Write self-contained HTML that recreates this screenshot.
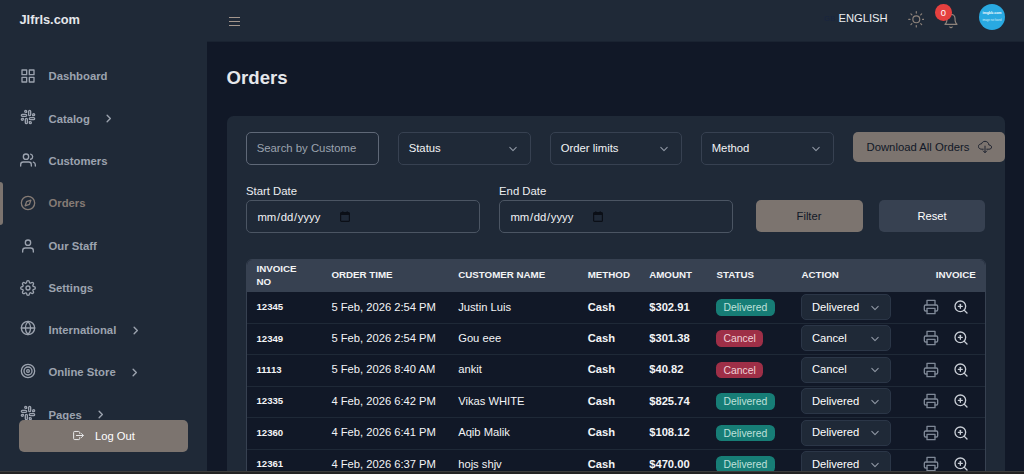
<!DOCTYPE html>
<html><head><meta charset="utf-8"><title>Orders</title>
<style>
*{box-sizing:border-box;margin:0;padding:0}
html,body{width:1024px;height:474px;overflow:hidden;background:#111827;font-family:"Liberation Sans",sans-serif;}
body{position:relative;color:#e5e7eb}
.abs{position:absolute}
#side{position:absolute;left:0;top:0;width:207px;height:474px;background:#1f2937}
#head{position:absolute;left:207px;top:0;width:817px;height:42px;background:#1f2937;border-bottom:1px solid #1a2331}
.brand{position:absolute;left:19.5px;top:12px;font-size:12.8px;font-weight:700;color:#e5e7eb;line-height:16px;white-space:nowrap}
.nav{position:absolute;left:0;width:207px;height:20px}
.nav svg.ic{position:absolute;left:19.5px;top:2.2px;width:16px;height:16px;fill:none;stroke:#9ca3af;stroke-width:2;stroke-linecap:round;stroke-linejoin:round}
.nav span{position:absolute;left:48.5px;top:3.5px;font-size:11.3px;font-weight:700;color:#9ca3af;line-height:14px;white-space:nowrap}
.nav svg.ch{position:absolute;top:4.5px;width:11px;height:11px;fill:none;stroke:#9ca3af;stroke-width:3;stroke-linecap:round;stroke-linejoin:round}
.nav.act svg.ic{stroke:#857b75}
.nav.act span{color:#857b75}
#actbar{position:absolute;left:0;top:182px;width:3px;height:42.5px;background:#7c746f;border-radius:0 4px 4px 0}
#logout{position:absolute;left:19px;top:420px;width:169px;height:31.5px;background:#7c746f;border-radius:5px}
#logout span{position:absolute;left:76px;top:9px;font-size:11.2px;color:#fff;line-height:14px;white-space:nowrap}
#logout svg{position:absolute;left:52.5px;top:9px;width:13px;height:13px;fill:none;stroke:#f3f4f6;stroke-width:36;stroke-linecap:round;stroke-linejoin:round}
#strip{position:absolute;left:0;top:471px;width:1024px;height:3px;background:#242424;border-top:1px solid #3d3d3d;z-index:50}
h1{position:absolute;left:226.6px;top:67.3px;font-size:18.6px;font-weight:700;color:#e5e7eb;line-height:22px}
#card{position:absolute;left:227px;top:116px;width:778px;height:380px;background:#1f2937;border-radius:6.5px}
.inp{position:absolute;height:33px;border:1px solid #4b5563;border-radius:5px;background:#1f2937;font-size:11.3px;line-height:14px;color:#f1f3f5;white-space:nowrap;overflow:hidden}
.inp span{position:absolute;left:9.7px;top:7.7px}
.inp i{font-style:normal;padding:0 .7px}
.sel{border-color:#374151}
.sel svg{position:absolute;right:9px;top:7.5px;width:16px;height:16px;fill:none;stroke:#8f97a4;stroke-width:1.35;stroke-linecap:round;stroke-linejoin:round}
.lbl{position:absolute;font-size:11.35px;color:#eceef1;line-height:14px}
.btn{position:absolute;border-radius:5px;font-size:11.2px;line-height:14px;text-align:center}
#tbl{position:absolute;left:246px;top:259px;width:740px;height:230px;border:1px solid #374151;border-radius:6px 6px 0 0;overflow:hidden;background:#111827}
#th{position:absolute;left:-1px;top:-1px;width:742px;height:32.5px;background:#374151}
#th div{position:absolute;font-size:9.75px;font-weight:700;color:#f3f4f6;line-height:13px;white-space:nowrap}
.row{position:absolute;left:0;width:740px;height:31.4px;border-top:1px solid #1f2937}
.row div{position:absolute;white-space:nowrap;line-height:14px;color:#f3f4f6}
.inv{left:9.5px;top:7.8px;font-size:9.6px;font-weight:700}
.tm{left:84.4px;top:7px;font-size:11.2px}
.nm{left:211.2px;top:7px;font-size:11.2px}
.mt{left:340.7px;top:7px;font-size:11.2px;font-weight:700}
.am{left:402.2px;top:7px;font-size:11.2px;font-weight:700}
.bd{left:469px;top:6.5px;height:16.5px;border-radius:5.5px;font-size:10.4px;line-height:17.6px !important;padding:0 7.5px}
.bd.d{background:#177d76;color:#bfe0db !important}
.bd.c{background:#9e2f47;color:#f0d2d8 !important}
.as{left:553.5px;top:1.5px;width:90px;height:26px;border:1px solid #2b3647;border-radius:5px;background:#1f2937}
.as span{position:absolute;left:10.5px;top:4.5px;font-size:11.2px;line-height:14px;color:#fff}
.as svg{position:absolute;left:65.2px;top:4.6px;width:16px;height:16px;fill:none;stroke:#8f97a4;stroke-width:1.35;stroke-linecap:round;stroke-linejoin:round}
.row svg.pr{position:absolute;left:676.2px;top:6.5px;width:16px;height:16px;fill:none;stroke:#7f8897;stroke-width:2;stroke-linecap:round;stroke-linejoin:round}
.row svg.zm{position:absolute;left:705.6px;top:6.5px;width:16px;height:16px;fill:none;stroke:#c9ced6;stroke-width:2;stroke-linecap:round;stroke-linejoin:round}
#wrap{position:absolute;left:0;top:0;width:1024px;height:474px; }
</style></head><body>
<div id="wrap">
<div id="side">
<div class="brand">Jlfrls.com</div>
<div id="actbar"></div>
<div class="nav" style="top:66.3px"><svg style="top:1.90px" class="ic" viewBox="0 0 24 24"><rect x="3" y="3" width="7" height="7"/><rect x="14" y="3" width="7" height="7"/><rect x="14" y="14" width="7" height="7"/><rect x="3" y="14" width="7" height="7"/></svg><span style="top:3.00px">Dashboard</span></div>
<div class="nav" style="top:108.6px"><svg style="top:0.60px" class="ic" viewBox="0 0 24 24"><path d="M14.5 10c-.83 0-1.5-.67-1.5-1.5v-5c0-.83.67-1.5 1.500-1.500s1.500.67 1.500 1.500v5c0 .83-.67 1.500-1.500 1.500z"/><path d="M20.500 10H19V8.500c0-.83.67-1.500 1.500-1.500s1.500.67 1.500 1.500-.67 1.500-1.500 1.500z"/><path d="M9.500 14c.83 0 1.500.67 1.500 1.500v5c0 .83-.67 1.500-1.500 1.500S8 21.330 8 20.500v-5c0-.83.67-1.500 1.500-1.500z"/><path d="M3.500 14H5v1.500c0 .83-.67 1.500-1.500 1.500S2 16.330 2 15.500 2.670 14 3.500 14z"/><path d="M14 14.500c0-.83.67-1.500 1.500-1.500h5c.83 0 1.500.67 1.500 1.500s-.67 1.500-1.500 1.500h-5c-.83 0-1.500-.67-1.500-1.500z"/><path d="M15.500 19H14v1.500c0 .83.67 1.500 1.500 1.500s1.500-.67 1.500-1.500-.67-1.500-1.500-1.500z"/><path d="M10 9.500C10 8.670 9.330 8 8.500 8h-5C2.670 8 2 8.670 2 9.500S2.670 11 3.500 11h5c.83 0 1.500-.67 1.500-1.500z"/><path d="M8.500 5H10V3.500C10 2.670 9.330 2 8.500 2S7 2.670 7 3.500 7.670 5 8.500 5z"/></svg><span style="top:3.10px">Catalog</span><svg class="ch" viewBox="0 0 24 24" style="left:103px;top:4.50px"><path d="M9 5l7 7-7 7"/></svg></div>
<div class="nav" style="top:150.9px"><svg style="top:1.60px" class="ic" viewBox="0 0 24 24"><path d="M17 21v-2a4 4 0 0 0-4-4H5a4 4 0 0 0-4 4v2"/><circle cx="9" cy="7" r="4"/><path d="M23 21v-2a4 4 0 0 0-3-3.870"/><path d="M16 3.130a4 4 0 0 1 0 7.750"/></svg><span style="top:3.50px">Customers</span></div>
<div class="nav act" style="top:193.2px"><svg style="top:2.30px" class="ic" viewBox="0 0 24 24"><circle cx="12" cy="12" r="10"/><polygon points="16.240 7.760 14.120 14.120 7.760 16.240 9.880 9.880 16.240 7.760"/></svg><span style="top:3.00px">Orders</span></div>
<div class="nav" style="top:235.5px"><svg style="top:2.00px" class="ic" viewBox="0 0 24 24"><path d="M20 21v-2a4 4 0 0 0-4-4H8a4 4 0 0 0-4 4v2"/><circle cx="12" cy="7" r="4"/></svg><span style="top:3.10px">Our Staff</span></div>
<div class="nav" style="top:277.8px"><svg style="top:2.20px" class="ic" viewBox="0 0 24 24"><circle cx="12" cy="12" r="3"/><path d="M19.400 15a1.650 1.650 0 0 0 .33 1.820l.06.06a2 2 0 0 1 0 2.830 2 2 0 0 1-2.830 0l-.06-.06a1.650 1.650 0 0 0-1.820-.33 1.650 1.650 0 0 0-1 1.510V21a2 2 0 0 1-2 2 2 2 0 0 1-2-2v-.09A1.650 1.650 0 0 0 9 19.400a1.650 1.650 0 0 0-1.820.33l-.06.06a2 2 0 0 1-2.830 0 2 2 0 0 1 0-2.830l.06-.06a1.650 1.650 0 0 0 .33-1.820 1.650 1.650 0 0 0-1.510-1H3a2 2 0 0 1-2-2 2 2 0 0 1 2-2h.09A1.650 1.650 0 0 0 4.600 9a1.650 1.650 0 0 0-.33-1.820l-.06-.06a2 2 0 0 1 0-2.830 2 2 0 0 1 2.830 0l.06.06a1.650 1.650 0 0 0 1.820.33H9a1.650 1.650 0 0 0 1-1.510V3a2 2 0 0 1 2-2 2 2 0 0 1 2 2v.09a1.650 1.650 0 0 0 1 1.510 1.650 1.650 0 0 0 1.820-.33l.06-.06a2 2 0 0 1 2.830 0 2 2 0 0 1 0 2.830l-.06.06a1.650 1.650 0 0 0-.33 1.820V9a1.650 1.650 0 0 0 1.510 1H21a2 2 0 0 1 2 2 2 2 0 0 1-2 2h-.09a1.650 1.650 0 0 0-1.510 1z"/></svg><span style="top:3.50px">Settings</span></div>
<div class="nav" style="top:320.1px"><svg style="top:-0.10px" class="ic" viewBox="0 0 24 24"><circle cx="12" cy="12" r="10"/><line x1="2" y1="12" x2="22" y2="12"/><path d="M12 2a15.300 15.300 0 0 1 4 10 15.300 15.300 0 0 1-4 10 15.300 15.300 0 0 1-4-10 15.300 15.300 0 0 1 4-10z"/></svg><span style="top:3.10px">International</span><svg class="ch" viewBox="0 0 24 24" style="left:130.3px;top:4.50px"><path d="M9 5l7 7-7 7"/></svg></div>
<div class="nav" style="top:362.4px"><svg style="top:0.20px" class="ic" viewBox="0 0 24 24"><circle cx="12" cy="12" r="10"/><circle cx="12" cy="12" r="6"/><circle cx="12" cy="12" r="2"/></svg><span style="top:3.10px">Online Store</span><svg class="ch" viewBox="0 0 24 24" style="left:129.3px;top:4.50px"><path d="M9 5l7 7-7 7"/></svg></div>
<div class="nav" style="top:404.7px"><svg style="top:0.20px" class="ic" viewBox="0 0 24 24"><path d="M14.5 10c-.83 0-1.5-.67-1.5-1.5v-5c0-.83.67-1.5 1.500-1.500s1.500.67 1.500 1.500v5c0 .83-.67 1.500-1.500 1.500z"/><path d="M20.500 10H19V8.500c0-.83.67-1.500 1.500-1.500s1.500.67 1.500 1.500-.67 1.500-1.500 1.500z"/><path d="M9.500 14c.83 0 1.500.67 1.500 1.500v5c0 .83-.67 1.500-1.500 1.500S8 21.330 8 20.500v-5c0-.83.67-1.500 1.500-1.500z"/><path d="M3.500 14H5v1.500c0 .83-.67 1.500-1.500 1.500S2 16.330 2 15.500 2.670 14 3.500 14z"/><path d="M14 14.500c0-.83.67-1.500 1.500-1.500h5c.83 0 1.500.67 1.500 1.500s-.67 1.500-1.500 1.500h-5c-.83 0-1.500-.67-1.500-1.500z"/><path d="M15.500 19H14v1.500c0 .83.67 1.500 1.500 1.500s1.500-.67 1.500-1.500-.67-1.500-1.500-1.500z"/><path d="M10 9.500C10 8.670 9.330 8 8.500 8h-5C2.670 8 2 8.670 2 9.500S2.670 11 3.500 11h5c.83 0 1.500-.67 1.500-1.500z"/><path d="M8.500 5H10V3.500C10 2.670 9.330 2 8.500 2S7 2.670 7 3.500 7.670 5 8.500 5z"/></svg><span style="top:3.10px">Pages</span><svg class="ch" viewBox="0 0 24 24" style="left:95px;top:4.50px"><path d="M9 5l7 7-7 7"/></svg></div>
<div id="logout"><svg viewBox="0 0 512 512"><path d="M304 336v40a40 40 0 01-40 40H104a40 40 0 01-40-40V136a40 40 0 0140-40h152c22.090 0 48 17.910 48 40v40M368 336l80-80-80-80M176 256h256"/></svg><span>Log Out</span></div>
</div>
<div id="head">
<svg class="abs" style="left:22px;top:16px;width:11px;height:11px" viewBox="0 0 11 11"><path d="M0 1.5h11M0 5.5h11M0 9.5h11" stroke="#a3968d" stroke-width="1" fill="none" shape-rendering="crispEdges"/></svg>
<div class="abs" style="left:617px;top:14.5px;font-size:7.4px;line-height:8px;letter-spacing:.4px;color:#18243f;white-space:nowrap">GB</div>
<div class="abs" style="left:631.5px;top:11px;font-size:11.2px;line-height:14px;color:#eceef1;white-space:nowrap">ENGLISH</div>
<svg class="abs" style="left:700.7px;top:11.2px;width:16.6px;height:16.6px;fill:none;stroke:#8e837b;stroke-width:1.7;stroke-linecap:round;stroke-linejoin:round" viewBox="0 0 24 24"><circle cx="12" cy="12" r="5"/><line x1="12" y1="1" x2="12" y2="3"/><line x1="12" y1="21" x2="12" y2="23"/><line x1="4.22" y1="4.22" x2="5.64" y2="5.64"/><line x1="18.36" y1="18.36" x2="19.78" y2="19.78"/><line x1="1" y1="12" x2="3" y2="12"/><line x1="21" y1="12" x2="23" y2="12"/><line x1="4.22" y1="19.78" x2="5.64" y2="18.36"/><line x1="18.36" y1="5.64" x2="19.78" y2="4.22"/></svg>
<svg class="abs" style="left:736px;top:13px;width:16px;height:16px;fill:none;stroke:#8e837b;stroke-width:1.8;stroke-linecap:round;stroke-linejoin:round" viewBox="0 0 24 24"><path d="M18 8A6 6 0 0 0 6 8c0 7-3 9-3 9h18s-3-2-3-9"/><path d="M13.73 21a2 2 0 0 1-3.46 0"/></svg>
<div class="abs" style="left:728.2px;top:4px;width:16.5px;height:16.5px;border-radius:50%;background:#e5403f;color:#fff;font-size:9.4px;line-height:17px;text-align:center">0</div>
<svg class="abs" style="left:772px;top:4px;width:26px;height:26px" viewBox="0 0 26 26"><circle cx="13" cy="13" r="13" fill="#29a9e1"/><text x="13" y="10.2" text-anchor="middle" font-family="Liberation Sans, sans-serif" font-weight="700" font-size="3.9" fill="#f4fbfe" textLength="19" lengthAdjust="spacingAndGlyphs">imgbb.com</text><text x="13" y="16.9" text-anchor="middle" font-family="Liberation Sans, sans-serif" font-size="2.9" fill="#d9f0fa" textLength="19.2" lengthAdjust="spacingAndGlyphs">image not found</text></svg>
</div>
<h1>Orders</h1>
<div id="card">
<div class="inp" style="left:19px;top:16px;width:133px;border-color:#5f6877"><span style="color:#9ca3af;font-size:11.35px">Search by Custome</span></div>
<div class="inp sel" style="left:171px;top:16px;width:133px"><span>Status</span><svg viewBox="0 0 20 20"><path d="M6 8l4 4 4-4"/></svg></div>
<div class="inp sel" style="left:323px;top:16px;width:132px"><span>Order limits</span><svg viewBox="0 0 20 20"><path d="M6 8l4 4 4-4"/></svg></div>
<div class="inp sel" style="left:474px;top:16px;width:133px"><span>Method</span><svg viewBox="0 0 20 20"><path d="M6 8l4 4 4-4"/></svg></div>
<div class="btn" style="left:626px;top:16px;width:152px;height:29.500px;background:#7c746f;color:#111827;text-align:left;font-size:11.3px"><span class="abs" style="left:13.500px;top:7.500px;white-space:nowrap">Download All Orders</span>
<svg class="abs" style="left:125px;top:8px;width:14px;height:14px;fill:none;stroke:#111827;stroke-width:32;stroke-linecap:round;stroke-linejoin:round" viewBox="0 0 512 512"><path d="M320 336h76c55 0 100-21.210 100-75.600s-53-73.470-96-75.600C391.110 99.740 329 48 256 48c-69 0-113.440 45.790-128 91.200-60 5.700-112 35.880-112 98.400S70 336 136 336h56M192 400.100l64 63.900 64-63.900M256 224v224.030"/></svg></div>
<div class="lbl" style="left:19px;top:68px">Start Date</div>
<div class="lbl" style="left:272px;top:68px">End Date</div>
<div class="inp" style="left:19px;top:84px;width:234px;height:32.500px"><span style="top:8.6px"><i>mm</i>/<i>dd</i>/<i>yyyy</i></span><svg class="abs" style="left:93px;top:9.5px;width:10px;height:11px" viewBox="0 0 10 11"><rect x="0.600" y="1.600" width="8.800" height="8.800" rx="1" fill="none" stroke="#0b0f17" stroke-width="1.200"/><rect x="0.600" y="1.600" width="8.800" height="2.400" fill="#0b0f17"/><path d="M2.800 0.300v1.600M7.200 0.300v1.600" stroke="#0b0f17" stroke-width="1.100"/></svg></div>
<div class="inp" style="left:272px;top:84px;width:234px;height:32.500px"><span style="top:8.6px"><i>mm</i>/<i>dd</i>/<i>yyyy</i></span><svg class="abs" style="left:93px;top:9.5px;width:10px;height:11px" viewBox="0 0 10 11"><rect x="0.600" y="1.600" width="8.800" height="8.800" rx="1" fill="none" stroke="#0b0f17" stroke-width="1.200"/><rect x="0.600" y="1.600" width="8.800" height="2.400" fill="#0b0f17"/><path d="M2.800 0.300v1.600M7.200 0.300v1.600" stroke="#0b0f17" stroke-width="1.100"/></svg></div>
<div class="btn" style="left:528.500px;top:84px;width:107px;height:32px;background:#7c746f;color:#111827;line-height:32px">Filter</div>
<div class="btn" style="left:652px;top:84px;width:106px;height:32px;background:#374151;color:#fff;line-height:32px">Reset</div>
</div>
<div id="tbl"><div id="th"><div style="left:10.5px;top:3.2px">INVOICE<br>NO</div>
<div style="left:85.4px;top:9.4px">ORDER TIME</div>
<div style="left:212.2px;top:9.4px">CUSTOMER NAME</div>
<div style="left:341.7px;top:9.4px">METHOD</div>
<div style="left:403.2px;top:9.4px">AMOUNT</div>
<div style="left:470.5px;top:9.4px">STATUS</div>
<div style="left:555.5px;top:9.4px">ACTION</div>
<div style="right:12.2px;top:9.4px">INVOICE</div></div>
<div class="row" style="top:31.5px;border-top-color:transparent"><div class="inv">12345</div><div class="tm">5 Feb, 2026 2:54 PM</div><div class="nm">Justin Luis</div><div class="mt">Cash</div><div class="am">$302.91</div><div class="bd d">Delivered</div><div class="as"><span>Delivered</span><svg viewBox="0 0 20 20"><path d="M6 8l4 4 4-4"/></svg></div><svg class="pr" viewBox="0 0 24 24"><polyline points="6 9 6 2 18 2 18 9"/><path d="M6 18H4a2 2 0 0 1-2-2v-5a2 2 0 0 1 2-2h16a2 2 0 0 1 2 2v5a2 2 0 0 1-2 2h-2"/><rect x="6" y="14" width="12" height="8"/></svg><svg class="zm" viewBox="0 0 24 24"><circle cx="11" cy="11" r="8"/><line x1="21" y1="21" x2="16.650" y2="16.650"/><line x1="11" y1="8" x2="11" y2="14"/><line x1="8" y1="11" x2="14" y2="11"/></svg></div>
<div class="row" style="top:62.9px"><div class="inv">12349</div><div class="tm">5 Feb, 2026 2:54 PM</div><div class="nm">Gou eee</div><div class="mt">Cash</div><div class="am">$301.38</div><div class="bd c">Cancel</div><div class="as"><span>Cancel</span><svg viewBox="0 0 20 20"><path d="M6 8l4 4 4-4"/></svg></div><svg class="pr" viewBox="0 0 24 24"><polyline points="6 9 6 2 18 2 18 9"/><path d="M6 18H4a2 2 0 0 1-2-2v-5a2 2 0 0 1 2-2h16a2 2 0 0 1 2 2v5a2 2 0 0 1-2 2h-2"/><rect x="6" y="14" width="12" height="8"/></svg><svg class="zm" viewBox="0 0 24 24"><circle cx="11" cy="11" r="8"/><line x1="21" y1="21" x2="16.650" y2="16.650"/><line x1="11" y1="8" x2="11" y2="14"/><line x1="8" y1="11" x2="14" y2="11"/></svg></div>
<div class="row" style="top:94.3px"><div class="inv">11113</div><div class="tm">5 Feb, 2026 8:40 AM</div><div class="nm">ankit</div><div class="mt">Cash</div><div class="am">$40.82</div><div class="bd c">Cancel</div><div class="as"><span>Cancel</span><svg viewBox="0 0 20 20"><path d="M6 8l4 4 4-4"/></svg></div><svg class="pr" viewBox="0 0 24 24"><polyline points="6 9 6 2 18 2 18 9"/><path d="M6 18H4a2 2 0 0 1-2-2v-5a2 2 0 0 1 2-2h16a2 2 0 0 1 2 2v5a2 2 0 0 1-2 2h-2"/><rect x="6" y="14" width="12" height="8"/></svg><svg class="zm" viewBox="0 0 24 24"><circle cx="11" cy="11" r="8"/><line x1="21" y1="21" x2="16.650" y2="16.650"/><line x1="11" y1="8" x2="11" y2="14"/><line x1="8" y1="11" x2="14" y2="11"/></svg></div>
<div class="row" style="top:125.7px"><div class="inv">12335</div><div class="tm">4 Feb, 2026 6:42 PM</div><div class="nm">Vikas WHITE</div><div class="mt">Cash</div><div class="am">$825.74</div><div class="bd d">Delivered</div><div class="as"><span>Delivered</span><svg viewBox="0 0 20 20"><path d="M6 8l4 4 4-4"/></svg></div><svg class="pr" viewBox="0 0 24 24"><polyline points="6 9 6 2 18 2 18 9"/><path d="M6 18H4a2 2 0 0 1-2-2v-5a2 2 0 0 1 2-2h16a2 2 0 0 1 2 2v5a2 2 0 0 1-2 2h-2"/><rect x="6" y="14" width="12" height="8"/></svg><svg class="zm" viewBox="0 0 24 24"><circle cx="11" cy="11" r="8"/><line x1="21" y1="21" x2="16.650" y2="16.650"/><line x1="11" y1="8" x2="11" y2="14"/><line x1="8" y1="11" x2="14" y2="11"/></svg></div>
<div class="row" style="top:157.1px"><div class="inv">12360</div><div class="tm">4 Feb, 2026 6:41 PM</div><div class="nm">Aqib Malik</div><div class="mt">Cash</div><div class="am">$108.12</div><div class="bd d">Delivered</div><div class="as"><span>Delivered</span><svg viewBox="0 0 20 20"><path d="M6 8l4 4 4-4"/></svg></div><svg class="pr" viewBox="0 0 24 24"><polyline points="6 9 6 2 18 2 18 9"/><path d="M6 18H4a2 2 0 0 1-2-2v-5a2 2 0 0 1 2-2h16a2 2 0 0 1 2 2v5a2 2 0 0 1-2 2h-2"/><rect x="6" y="14" width="12" height="8"/></svg><svg class="zm" viewBox="0 0 24 24"><circle cx="11" cy="11" r="8"/><line x1="21" y1="21" x2="16.650" y2="16.650"/><line x1="11" y1="8" x2="11" y2="14"/><line x1="8" y1="11" x2="14" y2="11"/></svg></div>
<div class="row" style="top:188.5px"><div class="inv">12361</div><div class="tm">4 Feb, 2026 6:37 PM</div><div class="nm">hojs shjv</div><div class="mt">Cash</div><div class="am">$470.00</div><div class="bd d">Delivered</div><div class="as"><span>Delivered</span><svg viewBox="0 0 20 20"><path d="M6 8l4 4 4-4"/></svg></div><svg class="pr" viewBox="0 0 24 24"><polyline points="6 9 6 2 18 2 18 9"/><path d="M6 18H4a2 2 0 0 1-2-2v-5a2 2 0 0 1 2-2h16a2 2 0 0 1 2 2v5a2 2 0 0 1-2 2h-2"/><rect x="6" y="14" width="12" height="8"/></svg><svg class="zm" viewBox="0 0 24 24"><circle cx="11" cy="11" r="8"/><line x1="21" y1="21" x2="16.650" y2="16.650"/><line x1="11" y1="8" x2="11" y2="14"/><line x1="8" y1="11" x2="14" y2="11"/></svg></div>
<div class="row" style="top:219.9px"><div class="inv">12362</div><div class="tm">4 Feb, 2026 6:30 PM</div><div class="nm">test</div><div class="mt">Cash</div><div class="am">$10.00</div><div class="bd d">Delivered</div><div class="as"><span>Delivered</span><svg viewBox="0 0 20 20"><path d="M6 8l4 4 4-4"/></svg></div><svg class="pr" viewBox="0 0 24 24"><polyline points="6 9 6 2 18 2 18 9"/><path d="M6 18H4a2 2 0 0 1-2-2v-5a2 2 0 0 1 2-2h16a2 2 0 0 1 2 2v5a2 2 0 0 1-2 2h-2"/><rect x="6" y="14" width="12" height="8"/></svg><svg class="zm" viewBox="0 0 24 24"><circle cx="11" cy="11" r="8"/><line x1="21" y1="21" x2="16.650" y2="16.650"/><line x1="11" y1="8" x2="11" y2="14"/><line x1="8" y1="11" x2="14" y2="11"/></svg></div>
</div>
<div id="strip"></div>
</div>
</body></html>
